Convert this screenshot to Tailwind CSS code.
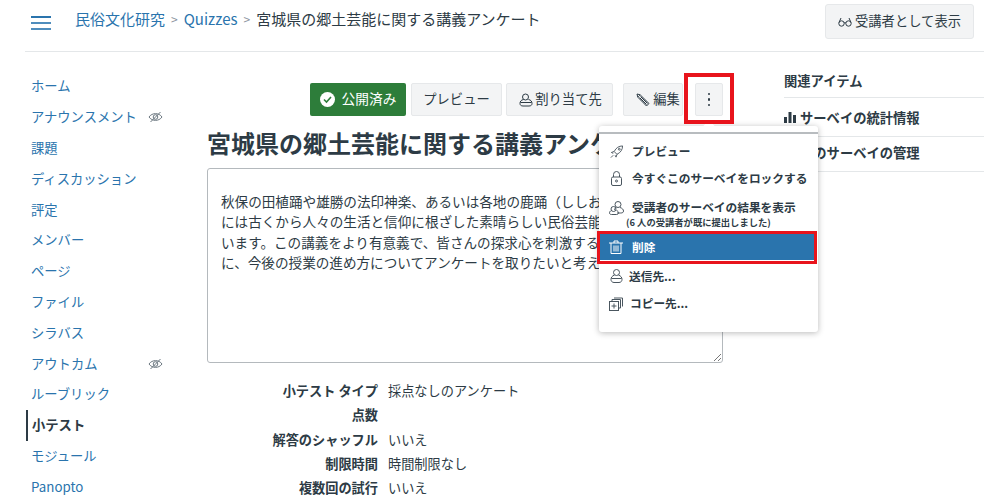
<!DOCTYPE html>
<html lang="ja">

<head>
    <meta charset="UTF-8">
    <title>宮城県の郷土芸能に関する講義アンケート</title>
    <script src="https://cdn.jsdelivr.net/npm/@tailwindcss/browser@4"></script>
</head>

<body class="bg-white overflow-hidden font-['Noto_Sans_CJK_JP','Noto_Sans',sans-serif] text-[#2d3b45]">
    <div class="relative w-[1000px] h-[503px] overflow-hidden">

        <!-- Header -->
        <header class="ml-[25px] w-[959px] h-[52px] border-b border-[#e4e7e9] flex items-start">
            <button class="mt-[16px] ml-[6px] w-[20px] h-[14px] flex flex-col justify-between">
                <span class="block h-[2px] w-[20px] bg-[#2a74ad]"></span>
                <span class="block h-[2px] w-[20px] bg-[#4f8dbd]"></span>
                <span class="block h-[2px] w-[20px] bg-[#4f8dbd]"></span>
            </button>
            <nav class="ml-[24px] mt-[8px] flex items-center text-[15px] leading-[22px] whitespace-nowrap">
                <a class="text-[#2a74ad]">民俗文化研究</a>
                <span class="mx-[6px] text-[#8d959f] text-[12px]">&gt;</span>
                <a class="text-[#2a74ad]">Quizzes</a>
                <span class="mx-[6px] text-[#8d959f] text-[12px]">&gt;</span>
                <span>宮城県の郷土芸能に関する講義アンケート</span>
            </nav>
            <button class="ml-auto mr-[10px] mt-[4px] h-[35px] w-[149px] pb-[2px] bg-[#f3f4f5] border border-[#e6e8ea] rounded-[3px] flex items-center justify-center text-[13.3px] gap-[3px] whitespace-nowrap">
                <svg class="w-[14px] h-[10px] mt-[2px]" viewBox="0 0 14 10" fill="none" stroke="#2d3b45" stroke-width="1">
                    <circle cx="3.500" cy="6.500" r="2.700" />
                    <circle cx="10.500" cy="6.500" r="2.700" />
                    <path d="M6 6c.6-.5 1.400-.5 2 0M1 5.500 3 1M13 5.500 11 1" />
                </svg>
                受講者として表示
            </button>
        </header>

        <div class="flex">
            <!-- Course nav -->
            <aside class="w-[207px] pl-[26px] pt-[19px] shrink-0 text-[13.3px] text-[#2a74ad]">
                <ul class="flex flex-col">
                    <li class="h-[30.800px] pl-[5px] flex items-center">ホーム</li>
                    <li class="h-[30.800px] pl-[5px] flex items-center">アナウンスメント
                        <svg class="ml-[11px] w-[15px] h-[12px]" viewBox="0 0 15 12" fill="none" stroke="#6b7780" stroke-width="1">
                            <path d="M1 6c3-4.500 10-4.500 13 0-3 4.500-10 4.500-13 0Z" />
                            <circle cx="7.500" cy="6" r="2.300" />
                            <path d="M2.500 11 12.500 1" />
                        </svg>
                    </li>
                    <li class="h-[30.800px] pl-[5px] flex items-center">課題</li>
                    <li class="h-[30.800px] pl-[5px] flex items-center">ディスカッション</li>
                    <li class="h-[30.800px] pl-[5px] flex items-center">評定</li>
                    <li class="h-[30.800px] pl-[5px] flex items-center">メンバー</li>
                    <li class="h-[30.800px] pl-[5px] flex items-center">ページ</li>
                    <li class="h-[30.800px] pl-[5px] flex items-center">ファイル</li>
                    <li class="h-[30.800px] pl-[5px] flex items-center">シラバス</li>
                    <li class="h-[30.800px] pl-[5px] flex items-center justify-between w-[137px]">アウトカム
                        <svg class="w-[15px] h-[12px]" viewBox="0 0 15 12" fill="none" stroke="#6b7780" stroke-width="1">
                            <path d="M1 6c3-4.500 10-4.500 13 0-3 4.500-10 4.500-13 0Z" />
                            <circle cx="7.500" cy="6" r="2.300" />
                            <path d="M2.500 11 12.500 1" />
                        </svg>
                    </li>
                    <li class="h-[30.800px] pl-[5px] flex items-center">ルーブリック</li>
                    <li class="h-[30.800px] pl-[4px] flex items-center border-l-2 border-[#2d3b45] font-bold text-[#2d3b45]">小テスト</li>
                    <li class="h-[30.800px] pl-[5px] flex items-center">モジュール</li>
                    <li class="h-[30.800px] pl-[5px] flex items-center">Panopto</li>
                </ul>
            </aside>

            <!-- Main column -->
            <main class="w-[516px] shrink-0">
                <div class="mt-[31px] flex h-[33px] text-[13.3px] whitespace-nowrap">
                    <div class="ml-[103px] w-[96px] pb-[2px] bg-[#2d7d3a] rounded-[2px] text-white text-[13.700px] flex items-center justify-center gap-[7px]">
                        <span class="w-[15px] h-[15px] mt-[2px] rounded-full bg-white flex items-center justify-center">
                            <svg class="w-[9px] h-[9px]" viewBox="0 0 9 9" fill="none" stroke="#2d7d3a" stroke-width="1.600">
                                <path d="M1 4.500 3.500 7 8 2" />
                            </svg>
                        </span>
                        公開済み
                    </div>
                    <div class="ml-[5px] w-[91px] pb-[2px] bg-[#f3f4f5] border border-[#e6e8ea] rounded-[2px] flex items-center justify-center">プレビュー</div>
                    <div class="ml-[4px] w-[107px] pb-[2px] pl-[2px] bg-[#f3f4f5] border border-[#e6e8ea] rounded-[2px] flex items-center justify-center gap-[2px]">
                        <svg class="w-[14px] h-[14px] mt-[2px]" viewBox="0 0 14 14" fill="none" stroke="#2d3b45" stroke-width="1">
                            <circle cx="6.500" cy="4" r="3" />
                            <path d="M4.500 6.500C2 7 1 8.500 1 10.500c0 1.500 1 2.500 3 2.500h6c2 0 3-1 3-2.500 0-2-1-3.500-3.500-4" />
                            <path d="M1.500 9.500h11" />
                        </svg>
                        割り当て先
                    </div>
                    <div class="ml-[10px] w-[60px] pb-[2px] pl-[10px] bg-[#f3f4f5] border border-[#e6e8ea] rounded-[2px] flex items-center justify-center gap-[3px]">
                        <svg class="w-[14px] h-[14px] mt-[2px] shrink-0" viewBox="0 0 14 14" fill="none" stroke="#2d3b45" stroke-width="1">
                            <path d="M1 1l3.200.8 8.800 8.700-2.500 2.500L1.800 4.200Z" />
                            <path d="M2.200 3.800 3.800 2.200M4.500 3.500l7 7M3.500 4.500l7 7" />
                        </svg>
                        編集
                    </div>
                    <div class="ml-[12px] w-[28px] bg-[#f3f4f5] border border-[#e6e8ea] rounded-[2px] flex flex-col items-center justify-center gap-[3px]">
                        <span class="w-[2.500px] h-[2.500px] rounded-full bg-[#2d3b45]"></span>
                        <span class="w-[2.500px] h-[2.500px] rounded-full bg-[#2d3b45]"></span>
                        <span class="w-[2.500px] h-[2.500px] rounded-full bg-[#2d3b45]"></span>
                    </div>
                </div>

                <h1 class="mt-[9px] h-[35px] text-[24px] leading-[35px] font-bold whitespace-nowrap">宮城県の郷土芸能に関する講義アンケート</h1>

                <div class="mt-[8px] relative h-[195px] border border-[#b4b9bd] rounded-[3px] pt-[22px] px-[13px] text-[13.600px] leading-[20.400px] overflow-hidden whitespace-nowrap">
                    <p>秋保の田植踊や雄勝の法印神楽、あるいは各地の鹿踊（ししおどり）など、宮城県</p>
                    <p>には古くから人々の生活と信仰に根ざした素晴らしい民俗芸能が</p>
                    <p>います。この講義をより有意義で、皆さんの探求心を刺激するものに</p>
                    <p>に、今後の授業の進め方についてアンケートを取りたいと考えています。</p>
                    <svg class="absolute right-[1px] bottom-[1px] w-[7px] h-[7px]" viewBox="0 0 7 7" stroke="#777" stroke-width="1">
                        <path d="M0 7 7 0M4 7l3-3" />
                    </svg>
                </div>

                <dl class="mt-[16px] grid grid-cols-[171px_1fr] gap-x-[10px] text-[13.2px] leading-[24.300px] whitespace-nowrap">
                    <dt class="text-right font-bold">小テスト タイプ</dt>
                    <dd>採点なしのアンケート</dd>
                    <dt class="text-right font-bold">点数</dt>
                    <dd></dd>
                    <dt class="text-right font-bold">解答のシャッフル</dt>
                    <dd>いいえ</dd>
                    <dt class="text-right font-bold">制限時間</dt>
                    <dd>時間制限なし</dd>
                    <dt class="text-right font-bold">複数回の試行</dt>
                    <dd>いいえ</dd>
                </dl>
            </main>

            <!-- Related items -->
            <aside class="ml-[61px] w-[200px] pt-[17px] text-[13.3px] font-bold whitespace-nowrap">
                <div class="h-[29px] border-b border-[#e4e7e9] leading-[24px]">関連アイテム</div>
                <div class="h-[39px] pt-[1px] border-b border-[#e4e7e9] flex items-center gap-[4px]">
                    <svg class="w-[12px] h-[11px]" viewBox="0 0 12 11" fill="#2d3b45">
                        <rect x="0" y="5" width="3" height="6" />
                        <rect x="4.500" y="0" width="3" height="11" />
                        <rect x="9" y="3" width="3" height="8" />
                    </svg>
                    サーベイの統計情報
                </div>
                <div class="h-[35px] pl-[16px] pb-[2px] border-b border-[#e4e7e9] flex items-center">このサーベイの管理</div>
            </aside>
        </div>

        <!-- Action menu -->
        <div class="absolute left-[599px] top-[126px] w-[219px] h-[206px] bg-white rounded-[3px] shadow-[0_1px_6px_rgba(0,0,0,0.28)] text-[11.700px] font-bold whitespace-nowrap">
            <div class="absolute left-[106px] -top-[4px] w-[8px] h-[8px] rotate-45 bg-white"></div>
            <div class="relative mt-[6px] h-[2px] bg-[#b8bcbf]"></div>
            <ul class="pt-[4px]">
                <li class="h-[27px] pb-[2px] flex items-center">
                    <svg class="ml-[10px] w-[15px] h-[14px] mt-[2px]" viewBox="0 0 15 15" fill="none" stroke="#4a565f" stroke-width="1">
                        <path d="M14 1c-4 0-7 2-9 6l3 3c4-2 6-5 6-9ZM5 7 2 8l2 1M8 10l-1 3-1-2M4 11l-2.500 2.500" />
                        <circle cx="10.500" cy="4.500" r="1" />
                    </svg>
                    <span class="ml-[8px]">プレビュー</span>
                </li>
                <li class="h-[27px] pb-[2px] flex items-center">
                    <svg class="ml-[12px] w-[11px] h-[15px] mt-[2px]" viewBox="0 0 11 15" fill="none" stroke="#4a565f" stroke-width="1">
                        <rect x="0.500" y="6" width="10" height="8.500" rx="1.500" />
                        <path d="M2.500 6V3.500a3 3 0 0 1 6 0V6" />
                        <circle cx="5.500" cy="10" r="1" />
                    </svg>
                    <span class="ml-[10px]">今すぐこのサーベイをロックする</span>
                </li>
                <li class="h-[42px] relative">
                    <svg class="absolute left-[10px] top-[9px] w-[15px] h-[14px]" viewBox="0 0 15 14" fill="none" stroke="#4a565f" stroke-width="1">
                        <circle cx="9" cy="3.500" r="3" />
                        <path d="M7 6.500C6 7.500 5.500 8 5.500 9M11 6.500c2 .5 3.500 2 3.500 3.500s-1 2-3 2H8" />
                        <circle cx="4.500" cy="8" r="2.500" />
                        <path d="M2.500 9.500C1 10 .5 11 .5 12s1 1.500 2 1.500h5c1 0 2-.5 2-1.500s-.5-2-2-2.500" />
                    </svg>
                    <span class="absolute left-[33px] top-[6px] leading-[18px]">受講者のサーベイの結果を表示</span>
                    <span class="absolute left-[27px] top-[24px] text-[9.300px] leading-[12px]">(6 人の受講者が既に提出しました)</span>
                </li>
                <li class="h-[26px] mx-[1px] bg-[#2a74ad] text-white flex items-center">
                    <svg class="ml-[9px] w-[14px] h-[14px]" viewBox="0 0 14 14" fill="none" stroke="#fff" stroke-width="1">
                        <path d="M0 3h14M5 3V1h4v2M2 3v10.500h10V3M5 5.500v6M7 5.500v6M9 5.500v6" />
                    </svg>
                    <span class="ml-[9px]">削除</span>
                </li>
                <li class="mt-[2px] h-[28px] flex items-center">
                    <svg class="ml-[11px] w-[13px] h-[14px]" viewBox="0 0 13 14" fill="none" stroke="#4a565f" stroke-width="1">
                        <circle cx="6.500" cy="3.500" r="3" />
                        <path d="M4.500 6C2 7 1 8.500 1 10.500c0 1.500 1 3 3 3h5c2 0 3-1.500 3-3 0-2-1-3.500-3.500-4.500" />
                        <path d="M1.500 9.500h10" />
                    </svg>
                    <span class="ml-[6px]">送信先...</span>
                </li>
                <li class="h-[27px] pb-[2px] flex items-center">
                    <svg class="ml-[10px] w-[14px] h-[14px] mt-[2px]" viewBox="0 0 14 14" fill="none" stroke="#4a565f" stroke-width="1">
                        <rect x="0.500" y="4.500" width="9" height="9" />
                        <path d="M3 4.500V2.500h8.500V11h-2M5 1h8.500v8.500M5 6.500v5M2.500 9h5" />
                    </svg>
                    <span class="ml-[7px]">コピー先...</span>
                </li>
            </ul>
        </div>

        <!-- Red callouts -->
        <div class="absolute left-[684px] top-[73px] w-[50px] h-[51px] border-[4px] border-[#e8141c]"></div>
        <div class="absolute left-[597px] top-[231px] w-[220px] h-[33px] border-[3px] border-[#e8141c]"></div>
    </div>
</body>

</html>
